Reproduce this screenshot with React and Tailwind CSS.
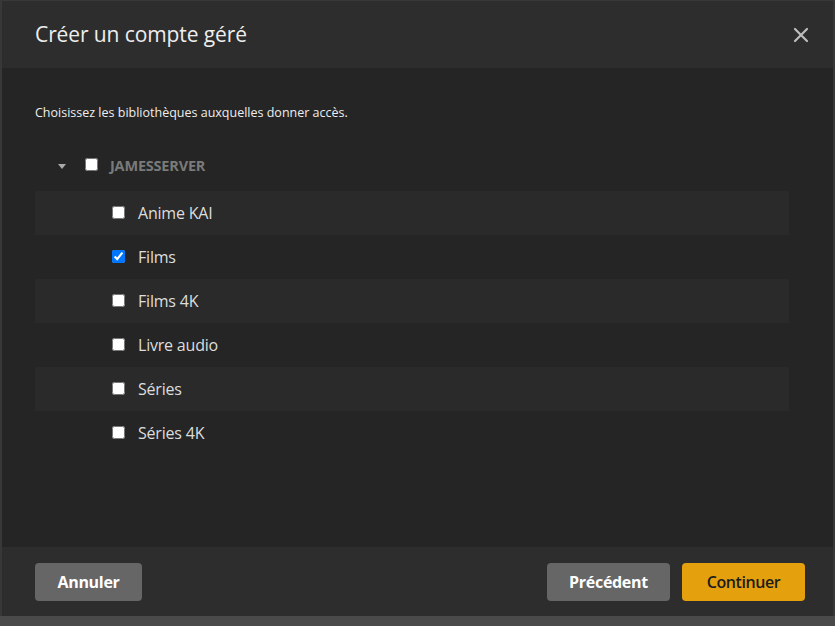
import React, { useState } from 'react';

const libraries = [
  { name: 'Anime KAI', checked: false },
  { name: 'Films', checked: true },
  { name: 'Films 4K', checked: false },
  { name: 'Livre audio', checked: false },
  { name: 'Séries', checked: false },
  { name: 'Séries 4K', checked: false },
];

export default function App() {
  const [libs, setLibs] = useState(libraries);

  const toggle = (idx) => {
    setLibs(libs.map((l, i) => (i === idx ? { ...l, checked: !l.checked } : l)));
  };

  return (
    <div className="w-[835px] h-[626px] bg-[#4a4a4a] overflow-hidden" style={{ fontFamily: '"Open Sans", "Noto Sans", sans-serif' }}>
      <div className="h-[616px] w-[835px] bg-[#383838] pl-[2px] pt-[1px]">
        <div className="h-[615px] w-[831px] flex flex-col bg-[#252525]">

          {/* Header */}
          <div className="h-[67px] shrink-0 bg-[#2d2d2d] flex items-center justify-between pl-[33px] pr-[20px]">
            <h1 className="text-[21px] text-[#eeeeee] tracking-[-0.1px]">Créer un compte géré</h1>
            <button className="text-[#bdbdbd] p-1">
              <svg width="16" height="16" viewBox="0 0 16 16" fill="none" stroke="currentColor" strokeWidth="2.2" strokeLinecap="round">
                <path d="M2 2 L14 14 M14 2 L2 14" />
              </svg>
            </button>
          </div>

          {/* Body */}
          <div className="flex-1 pl-[33px] pr-[44px] pt-[36px]">
            <p className="text-[12.5px] text-[#eeeeee]">Choisissez les bibliothèques auxquelles donner accès.</p>

            <div className="mt-[28px] flex items-center h-[30px]">
              <svg width="8" height="5" viewBox="0 0 8 5" className="ml-[23px] mt-[2px]">
                <path d="M0 0 L8 0 L4 5 Z" fill="#aaaaaa" />
              </svg>
              <input type="checkbox" className="ml-[19px] mb-[2px] w-[13px] h-[13px] m-0" />
              <span className="ml-[12px] text-[14.5px] font-bold text-[#7a7a7a] tracking-[-0.2px]">JAMESSERVER</span>
            </div>

            <div className="mt-[10px]">
              {libs.map((lib, i) => (
                <div key={lib.name} className={`h-[44px] flex items-center ${i % 2 === 0 ? 'bg-[#2a2a2a]' : ''}`}>
                  <input
                    type="checkbox"
                    checked={lib.checked}
                    onChange={() => toggle(i)}
                    className="ml-[77px] w-[13px] h-[13px] m-0 accent-[#0075ff]"
                  />
                  <span className="ml-[13px] text-[16px] text-[#dddddd] tracking-[-0.2px]">{lib.name}</span>
                </div>
              ))}
            </div>
          </div>

          {/* Footer */}
          <div className="h-[69px] shrink-0 bg-[#2d2d2d] flex items-center justify-between pl-[33px] pr-[28px]">
            <button className="h-[38px] w-[107px] rounded bg-[#666666] text-white font-bold text-[16px] tracking-[-0.3px]">Annuler</button>
            <div className="flex gap-[12px]">
              <button className="h-[38px] w-[123px] rounded bg-[#666666] text-white font-bold text-[16px] tracking-[-0.3px]">Précédent</button>
              <button className="h-[38px] w-[123px] rounded bg-[#e5a00d] text-[#1c1c1c] font-semibold text-[16px] tracking-[-0.4px]">Continuer</button>
            </div>
          </div>

        </div>
      </div>
    </div>
  );
}
